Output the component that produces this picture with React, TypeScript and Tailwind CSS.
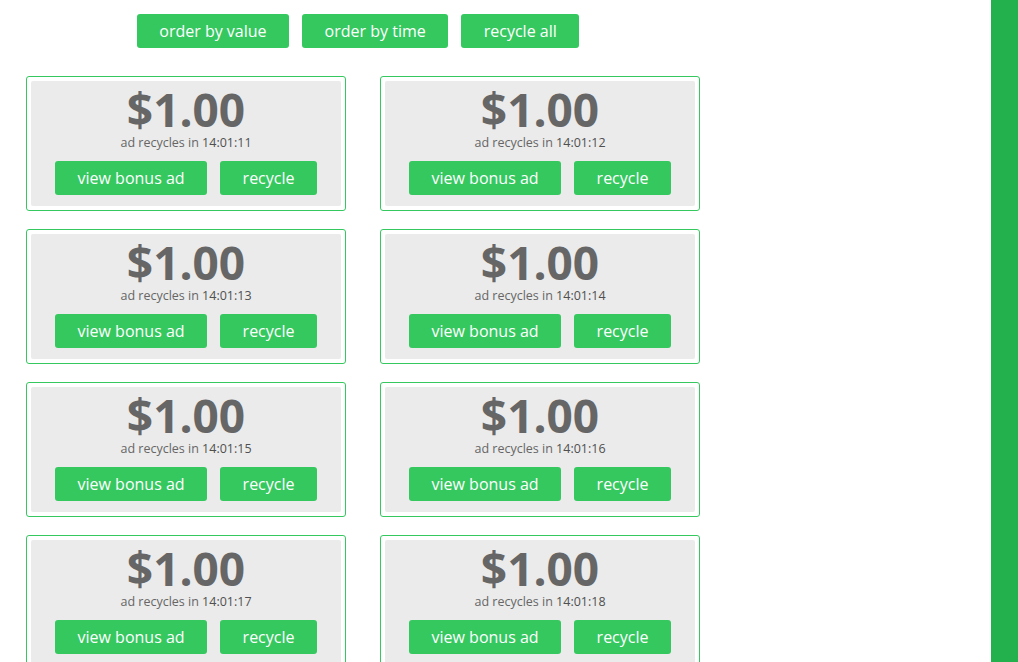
const ads = [
  "14:01:11",
  "14:01:12",
  "14:01:13",
  "14:01:14",
  "14:01:15",
  "14:01:16",
  "14:01:17",
  "14:01:18",
];

function GreenButton({ label }: { label: string }) {
  return (
    <button className="h-[34px] rounded-[3px] bg-[#34c85f] px-[22.5px] text-[16px] leading-none text-white">
      {label}
    </button>
  );
}

function AdCard({ time }: { time: string }) {
  return (
    <div className="rounded-[3px] border border-[#34c85f] bg-white p-[4px]">
      <div className="flex h-[125px] flex-col items-center rounded-[2px] bg-[#ebebeb] pt-[5px]">
        <p className="text-[46px] leading-[46px] font-bold text-[#666]">$1.00</p>
        <p className="mt-[2px] text-[12.5px] leading-[17px] text-[#666]">
          ad recycles in <span className="font-medium text-[#505050]">{time}</span>
        </p>
        <div className="mt-[10px] flex gap-[13px]">
          <GreenButton label="view bonus ad" />
          <GreenButton label="recycle" />
        </div>
      </div>
    </div>
  );
}

export default function App() {
  return (
    <div className="flex h-[662px] overflow-hidden bg-white font-['Open_Sans',sans-serif]">
      <main className="flex-1">
        <div className="flex w-[716px] justify-center gap-[13px] pt-[14px]">
          <GreenButton label="order by value" />
          <GreenButton label="order by time" />
          <GreenButton label="recycle all" />
        </div>
        <div className="mt-[28px] ml-[26px] grid w-[674px] grid-cols-2 gap-x-[34px] gap-y-[18px]">
          {ads.map((time) => (
            <AdCard key={time} time={time} />
          ))}
        </div>
      </main>
      <aside className="w-[27px] bg-[#22b14c]" />
    </div>
  );
}
